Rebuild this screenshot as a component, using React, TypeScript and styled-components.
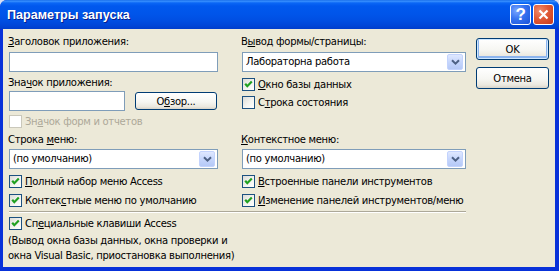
import React from 'react';
import styled, { createGlobalStyle, css } from 'styled-components';

const GlobalStyle = createGlobalStyle`
  html, body {
    margin: 0;
    padding: 0;
    background: #d6dff5;
  }
  * {
    box-sizing: border-box;
  }
`;

const Window = styled.div`
  width: 559px;
  height: 271px;
  display: flex;
  flex-direction: column;
  font-family: "DejaVu Sans", "Liberation Sans", sans-serif;
  font-size: 10px;
  letter-spacing: -0.3px;
  color: #000;
  border-radius: 7px 7px 0 0;
  overflow: hidden;
  background: #0831d9;
`;

const TitleBar = styled.div`
  height: 29px;
  flex: none;
  display: flex;
  align-items: center;
  justify-content: space-between;
  padding: 0 5px 0 7px;
  background: linear-gradient(
    180deg,
    #0a5fe3 0px,
    #3d95ff 1px,
    #0a66f5 3px,
    #0058ee 6px,
    #0055ea 14px,
    #004fe3 20px,
    #0047d9 25px,
    #003dcc 29px
  );
`;

const Title = styled.span`
  font-family: "Liberation Sans", "DejaVu Sans", sans-serif;
  font-weight: bold;
  font-size: 12.6px;
  letter-spacing: 0;
  color: #fff;
  text-shadow: 1px 1px 0 #0a1e8a;
  padding-top: 1px;
`;

const Caption = styled.div`
  display: flex;
  gap: 2px;
`;

const CaptionButton = styled.div<{ $close?: boolean }>`
  width: 21px;
  height: 21px;
  border: 1px solid #fff;
  border-radius: 3px;
  display: flex;
  align-items: center;
  justify-content: center;
  ${({ $close }) =>
    $close
      ? css`
          background: radial-gradient(circle at 30% 30%, #f08c6c 0%, #e05a36 45%, #c8391c 100%);
        `
      : css`
          background: radial-gradient(circle at 30% 30%, #7aa6ff 0%, #3673f0 45%, #1b52d8 100%);
        `}
`;

const HelpGlyph = styled.span`
  font-family: "Liberation Sans", sans-serif;
  font-weight: bold;
  font-size: 17px;
  line-height: 1;
  color: #fff;
`;

const Client = styled.div`
  flex: 1;
  display: flex;
  margin: 0 4px 4px 3px;
  padding: 0 6px 0 6px;
  background: #ece9d8;
`;

const Main = styled.div`
  width: 457px;
  display: flex;
  flex-direction: column;
  padding-top: 6px;
`;

const Columns = styled.div`
  display: grid;
  grid-template-columns: 209px 224px;
  column-gap: 24px;
  row-gap: 5px;
`;

const Column = styled.div`
  display: flex;
  flex-direction: column;
  align-items: flex-start;
`;

const Label = styled.div<{ $mt?: number }>`
  height: 13px;
  line-height: 13px;
  margin-top: ${({ $mt }) => $mt ?? 0}px;
  margin-left: -1px;
  white-space: nowrap;
`;

const Key = styled.span`
  text-decoration: underline;
  text-underline-offset: 1px;
`;

const TextBox = styled.div<{ $w: number; $mt?: number }>`
  width: ${({ $w }) => $w}px;
  height: 20px;
  margin-top: ${({ $mt }) => $mt ?? 0}px;
  border: 1px solid #7f9db9;
  background: #fff;
  flex: none;
`;

const Combo = styled.div<{ $w: number; $mt?: number }>`
  width: ${({ $w }) => $w}px;
  height: 20px;
  margin-top: ${({ $mt }) => $mt ?? 0}px;
  border: 1px solid #7f9db9;
  background: #fff;
  display: flex;
  align-items: center;
  padding: 1px;
`;

const ComboText = styled.span`
  flex: 1;
  padding-left: 2px;
  line-height: 16px;
  white-space: nowrap;
`;

const DropButton = styled.div`
  width: 16px;
  height: 16px;
  margin-right: 1px;
  border: 1px solid #c3d3fd;
  border-radius: 2px;
  background: linear-gradient(180deg, #dfe8ff 0%, #c6d6fc 50%, #b5c9f7 100%);
  display: flex;
  align-items: center;
  justify-content: center;
`;

const InlineRow = styled.div<{ $mt?: number }>`
  display: flex;
  align-items: center;
  gap: 10px;
  margin-top: ${({ $mt }) => $mt ?? 0}px;
`;

const PushButton = styled.div<{ $w: number; $h: number; $default?: boolean }>`
  width: ${({ $w }) => $w}px;
  height: ${({ $h }) => $h}px;
  border: 1px solid #003c74;
  border-radius: 3px;
  background: linear-gradient(180deg, #ffffff 0%, #f6f6f2 55%, #ebe8df 85%, #d8d3c8 100%);
  display: flex;
  align-items: center;
  justify-content: center;
  white-space: nowrap;
  flex: none;
  ${({ $default }) =>
    $default &&
    css`
      box-shadow: inset 0 0 0 1px #cee7ff, inset 0 -1px 0 2px #8cb4ee;
    `}
`;

const CheckRow = styled.div<{ $mt?: number; $disabled?: boolean }>`
  display: flex;
  align-items: center;
  gap: 3px;
  height: 13px;
  margin-top: ${({ $mt }) => $mt ?? 0}px;
  white-space: nowrap;
  color: ${({ $disabled }) => ($disabled ? '#aca899' : '#000')};
`;

const Box = styled.div<{ $disabled?: boolean }>`
  width: 13px;
  height: 13px;
  flex: none;
  border: 1px solid ${({ $disabled }) => ($disabled ? '#cac8bb' : '#1c5180')};
  background: ${({ $disabled }) =>
    $disabled ? '#fff' : 'linear-gradient(135deg, #dcdcd7 0%, #f4f4f0 55%, #ffffff 100%)'};
  display: flex;
  align-items: center;
  justify-content: center;
`;

const Separator = styled.div`
  height: 2px;
  margin-top: 4px;
  border-top: 1px solid #aca899;
  border-bottom: 1px solid #fff;
`;

const Note = styled.div`
  margin-top: 3px;
  margin-left: -1px;
  line-height: 15px;
`;

const ButtonColumn = styled.div`
  display: flex;
  flex-direction: column;
  gap: 7px;
  margin-left: 10px;
  padding-top: 9px;
`;

const Chevron = () => (
  <svg width="9" height="6" viewBox="0 0 9 6">
    <path d="M1 1.2 L4.5 4.6 L8 1.2" stroke="#4d6185" strokeWidth="2" fill="none" />
  </svg>
);

const Check = () => (
  <svg width="11" height="11" viewBox="0 0 11 11">
    <path d="M2.2 4.8 L4.3 7.2 L8.8 2.6" stroke="#21a121" strokeWidth="2.2" fill="none" />
  </svg>
);

interface CheckProps {
  checked?: boolean;
  disabled?: boolean;
  mt?: number;
  children: React.ReactNode;
}

const CheckBox: React.FC<CheckProps> = ({ checked, disabled, mt, children }) => (
  <CheckRow $mt={mt} $disabled={disabled}>
    <Box $disabled={disabled}>{checked && <Check />}</Box>
    <span>{children}</span>
  </CheckRow>
);

const ComboBox: React.FC<{ value: string; w: number; mt?: number }> = ({ value, w, mt }) => (
  <Combo $w={w} $mt={mt}>
    <ComboText>{value}</ComboText>
    <DropButton>
      <Chevron />
    </DropButton>
  </Combo>
);

const App: React.FC = () => {
  return (
    <>
      <GlobalStyle />
      <Window>
        <TitleBar>
          <Title>Параметры запуска</Title>
          <Caption>
            <CaptionButton>
              <HelpGlyph>?</HelpGlyph>
            </CaptionButton>
            <CaptionButton $close>
              <svg width="11" height="11" viewBox="0 0 11 11">
                <path d="M1.5 1.5 L9.5 9.5 M9.5 1.5 L1.5 9.5" stroke="#fff" strokeWidth="2.2" />
              </svg>
            </CaptionButton>
          </Caption>
        </TitleBar>

        <Client>
          <Main>
            <Columns>
              <Column>
                <Label>
                  <Key>З</Key>аголовок приложения:
                </Label>
                <TextBox $w={209} $mt={4} />
                <Label $mt={4}>
                  Зна<Key>ч</Key>ок приложения:
                </Label>
                <InlineRow $mt={2}>
                  <TextBox $w={116} />
                  <PushButton $w={82} $h={18}>
                    О<Key>б</Key>зор...
                  </PushButton>
                </InlineRow>
                <CheckBox disabled mt={4}>
                  Зн<Key>а</Key>чок форм и отчетов
                </CheckBox>
              </Column>

              <Column>
                <Label>
                  В<Key>ы</Key>вод формы/страницы:
                </Label>
                <ComboBox value="Лабораторна работа" w={224} mt={4} />
                <CheckBox checked mt={6}>
                  <Key>О</Key>кно базы данных
                </CheckBox>
                <CheckBox mt={5}>
                  С<Key>т</Key>рока состояния
                </CheckBox>
              </Column>

              <Column>
                <Label>
                  Строка <Key>м</Key>еню:
                </Label>
                <ComboBox value="(по умолчанию)" w={209} mt={3} />
                <CheckBox checked mt={6}>
                  <Key>П</Key>олный набор меню Access
                </CheckBox>
                <CheckBox checked mt={6}>
                  Контек<Key>с</Key>тные меню по умолчанию
                </CheckBox>
              </Column>

              <Column>
                <Label>
                  <Key>К</Key>онтекстное меню:
                </Label>
                <ComboBox value="(по умолчанию)" w={224} mt={3} />
                <CheckBox checked mt={6}>
                  <Key>В</Key>строенные панели инструментов
                </CheckBox>
                <CheckBox checked mt={6}>
                  <Key>И</Key>зменение панелей инструментов/меню
                </CheckBox>
              </Column>
            </Columns>

            <Separator />

            <CheckBox checked mt={4}>
              Сп<Key>е</Key>циальные клавиши Access
            </CheckBox>
            <Note>
              (Вывод окна базы данных, окна проверки и
              <br />
              окна Visual Basic, приостановка выполнения)
            </Note>
          </Main>

          <ButtonColumn>
            <PushButton $w={73} $h={22} $default>
              OK
            </PushButton>
            <PushButton $w={73} $h={22}>
              Отмена
            </PushButton>
          </ButtonColumn>
        </Client>
      </Window>
    </>
  );
};

export default App;
